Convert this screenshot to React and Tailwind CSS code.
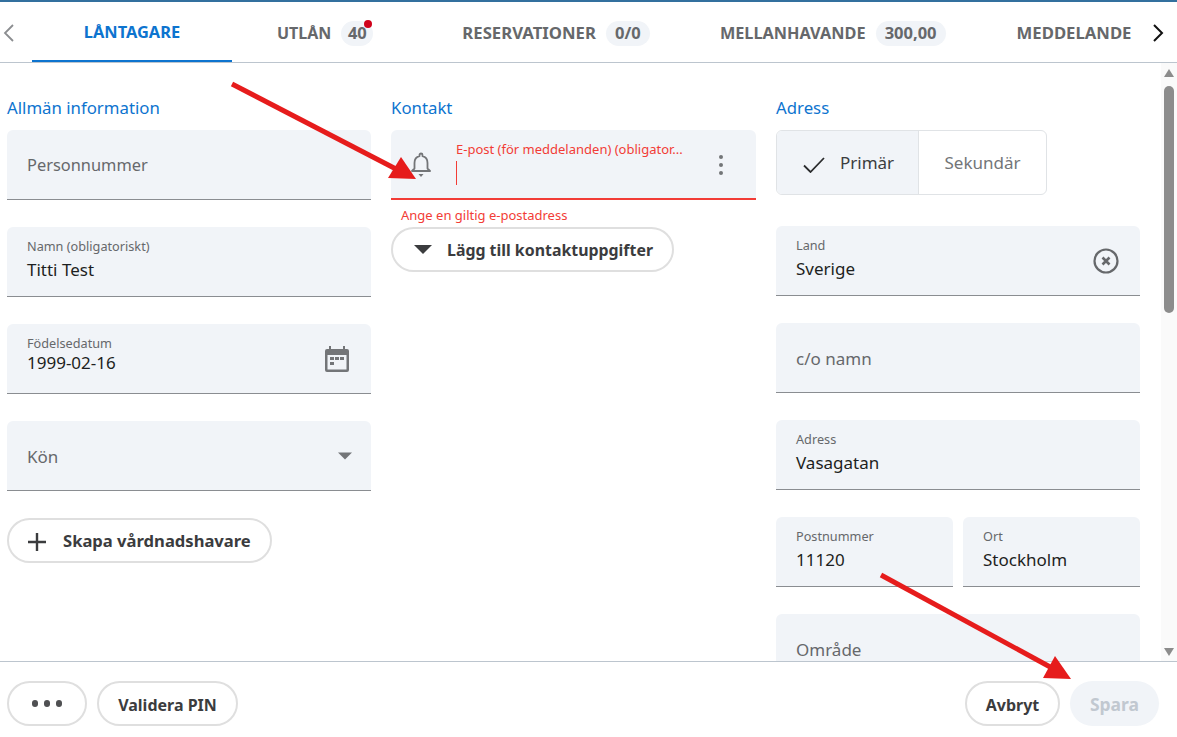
import React from 'react';

const Field = ({ label, value, icon, dense, labelSize = 'text-[17px]', className = 'h-[70px]' }) => (
  <div className={`relative flex flex-col justify-center rounded-t-md border-b border-[#8a8d91] bg-[#f1f4f8] px-5 ${value ? (dense ? 'pb-[8px]' : 'pb-[5px]') : ''} ${className}`}>
    {value ? (
      <>
        <span className="text-[12.7px] leading-4 text-[#66686b]">{label}</span>
        <span className={`${dense ? 'mt-[1px]' : 'mt-[5px]'} text-[17px] leading-[22px] text-[#1d1f21]`}>{value}</span>
      </>
    ) : (
      <span className={`mt-[2px] ${labelSize} text-[#66686b]`}>{label}</span>
    )}
    {icon && <div className="absolute right-[21px] top-1/2 flex -translate-y-1/2">{icon}</div>}
  </div>
);

const Pill = ({ children, className = '' }) => (
  <button className={`flex h-[45px] shrink-0 items-center rounded-full border-2 border-[#dfdfdf] bg-white pt-[2px] font-bold text-[#3b3c3e] ${className}`}>
    {children}
  </button>
);

const Badge = ({ children, className = '' }) => (
  <span className={`ml-[10px] flex h-[25px] shrink-0 items-center justify-center rounded-full bg-[#f1f4f8] text-[16.5px] font-bold text-[#66686b] ${className}`}>
    {children}
  </span>
);

const Tab = ({ children, className = 'text-[16.7px]' }) => (
  <span className={`shrink-0 font-bold text-[#66686b] ${className}`}>{children}</span>
);

const CalendarIcon = () => (
  <svg width="26" height="28" viewBox="0 0 26 28" fill="#737578">
    <path d="M5 1h2v3h12V1h2v3h2a2 2 0 0 1 2 2v19a2 2 0 0 1-2 2H3a2 2 0 0 1-2-2V6a2 2 0 0 1 2-2h2zM3.500 10v14.500h19V10z" />
    <rect x="6" y="12" width="4" height="3" />
    <rect x="11" y="12" width="4" height="3" />
    <rect x="16" y="12" width="4" height="3" />
    <rect x="6" y="17" width="4" height="3" />
  </svg>
);

const ClearIcon = () => (
  <svg width="26" height="26" viewBox="0 0 26 26" fill="none" stroke="#66686b">
    <circle cx="13" cy="13" r="11.5" strokeWidth="2.2" />
    <path d="M9.500 9.500l7 7M16.500 9.500l-7 7" strokeWidth="2.6" />
  </svg>
);

const BellIcon = () => (
  <svg width="20" height="26" viewBox="0 0 20 26" fill="none">
    <path
      d="M10 1.500a1.500 1.500 0 0 1 1.500 1.500v1.200C15 5 16.500 8 16.500 11v5.500L19 19H1l2.500-2.500V11C3.500 8 5 5 8.500 4.200V3A1.500 1.500 0 0 1 10 1.500z"
      stroke="#737578"
      strokeWidth="1.8"
      strokeLinejoin="round"
    />
    <path d="M7.500 22h5L10 25z" fill="#737578" />
  </svg>
);

export default function App() {
  return (
    <div className="relative flex h-[737px] w-[1177px] flex-col overflow-hidden border-t-2 border-[#33709e] bg-white font-['Noto_Sans',sans-serif]">
      {/* Tabs */}
      <div className="flex h-[61px] shrink-0 items-center border-b border-[#bcc5ce] pt-[2px]">
        <svg className="ml-[3px] shrink-0" width="11" height="18" viewBox="0 0 11 18" fill="none" stroke="#8b8d90" strokeWidth="1.800">
          <path d="M10 1L2 9l8 8" />
        </svg>
        <div className="-mt-[2px] ml-[18px] flex h-[60px] w-[200px] shrink-0 items-center justify-center border-b-2 border-[#0d74cf] pt-[2px]">
          <Tab className="text-[16.4px] !text-[#0d74cf]">LÅNTAGARE</Tab>
        </div>
        <Tab className="ml-[45px] text-[16px]">UTLÅN</Tab>
        <Badge className="relative w-[32px]">
          40
          <span className="absolute right-[1px] top-[-1px] h-2 w-2 rounded-full bg-[#d0021b]" />
        </Badge>
        <Tab className="ml-[89px] text-[16.7px]">RESERVATIONER</Tab>
        <Badge className="w-[44px]">0/0</Badge>
        <Tab className="ml-[70px] text-[16.3px]">MELLANHAVANDE</Tab>
        <Badge className="w-[70px]">300,00</Badge>
        <Tab className="ml-[71px] text-[16.7px]">MEDDELANDE</Tab>
        <svg className="ml-[22px] shrink-0" width="11" height="18" viewBox="0 0 11 18" fill="none" stroke="#111111" strokeWidth="2">
          <path d="M1 1l8 8-8 8" />
        </svg>
      </div>

      {/* Content */}
      <div className="relative flex min-h-0 flex-1 overflow-hidden">
        <div className="grid flex-1 grid-cols-[364px_365px_364px] gap-x-5 pl-[7px] pt-[33px]">
          <div className="flex flex-col">
            <h2 className="mb-[11px] h-[23px] text-[16.8px] leading-[23px] text-[#0d74cf]">Allmän information</h2>
            <div className="flex flex-col gap-[27px]">
              <Field label="Personnummer" labelSize="text-[16.4px]" />
              <Field label="Namn (obligatoriskt)" value="Titti Test" />
              <Field label="Födelsedatum" value="1999-02-16" dense icon={<CalendarIcon />} />
              <Field
                label="Kön"
                icon={<div className="mr-[-2px] h-0 w-0 border-x-[7px] border-t-[7px] border-x-transparent border-t-[#737578]" />}
              />
              <Pill className="w-[265px] pl-[19px] text-[16.6px]">
                <svg width="18" height="18" viewBox="0 0 18 18" stroke="#3b3c3e" strokeWidth="2.400">
                  <path d="M9 0v18M0 9h18" />
                </svg>
                <span className="ml-[17px]">Skapa vårdnadshavare</span>
              </Pill>
            </div>
          </div>

          <div className="flex flex-col">
            <h2 className="mb-[11px] h-[23px] text-[16.8px] leading-[23px] text-[#0d74cf]">Kontakt</h2>
            <div className="relative h-[70px] rounded-t-md border-b-2 border-[#f23c36] bg-[#f1f4f8]">
              <div className="absolute left-[20px] top-[22px] flex"><BellIcon /></div>
              <span className="absolute left-[65px] top-[11px] text-[13px] leading-4 text-[#f23c36]">E-post (för meddelanden) (obligator...</span>
              <span className="absolute left-[65px] top-[31px] h-6 w-px bg-[#f23c36]" />
              <div className="absolute right-[33px] top-[25px] flex flex-col gap-[4px]">
                <span className="h-1 w-1 rounded-full bg-[#737578]" />
                <span className="h-1 w-1 rounded-full bg-[#737578]" />
                <span className="h-1 w-1 rounded-full bg-[#737578]" />
              </div>
            </div>
            <p className="ml-[10px] mt-[6px] text-[13px] leading-[18px] text-[#f23c36]">Ange en giltig e-postadress</p>
            <Pill className="mt-[3px] w-[283px] pl-[21px] text-[15.9px]">
              <span className="-mt-[2px] h-0 w-0 border-x-[9px] border-t-[9px] border-x-transparent border-t-[#3b3c3e]" />
              <span className="ml-[15px]">Lägg till kontaktuppgifter</span>
            </Pill>
          </div>

          <div className="flex flex-col">
            <h2 className="mb-[11px] h-[23px] text-[16.8px] leading-[23px] text-[#0d74cf]">Adress</h2>
            <div className="mb-[31px] flex h-[65px] w-[271px] overflow-hidden rounded-md border border-[#e0e3e6]">
              <div className="flex w-[142px] items-center border-r border-[#e0e3e6] bg-[#f1f4f8] pl-[26px] text-[#3b3c3e]">
                <svg className="mt-[5px]" width="22" height="16" viewBox="0 0 22 16" fill="none" stroke="#2b2c2e" strokeWidth="1.800">
                  <path d="M1 8.500L7.500 15 21 1" />
                </svg>
                <span className="ml-[15px] text-[17px]">Primär</span>
              </div>
              <div className="flex flex-1 items-center justify-center text-[17px] text-[#737578]">Sekundär</div>
            </div>
            <div className="flex flex-col gap-[27px]">
              <Field label="Land" value="Sverige" icon={<ClearIcon />} />
              <Field label="c/o namn" />
              <Field label="Adress" value="Vasagatan" />
              <div className="grid grid-cols-[177px_177px] gap-x-[10px]">
                <Field label="Postnummer" value="11120" />
                <Field label="Ort" value="Stockholm" />
              </div>
              <Field label="Område" />
            </div>
          </div>
        </div>

        {/* Scrollbar */}
        <div className="flex w-4 shrink-0 flex-col items-center bg-[#fafafa] pt-[6px]">
          <span className="h-0 w-0 border-x-[5px] border-b-[8px] border-x-transparent border-b-[#8c8c8c]" />
          <span className="mt-[9px] h-[227px] w-[10px] rounded-full bg-[#8c8c8c]" />
          <span className="mb-[5px] mt-auto h-0 w-0 border-x-[5px] border-t-[8px] border-x-transparent border-t-[#8c8c8c]" />
        </div>
      </div>

      {/* Footer */}
      <div className="flex h-[76px] shrink-0 items-start border-t border-[#bcc5ce] pl-[7px] pr-[18px] pt-[19px]">
        <Pill className="w-[80px] justify-center gap-[5.500px] !pt-0">
          <span className="h-[6.500px] w-[6.500px] rounded-full bg-[#4f5052]" />
          <span className="h-[6.500px] w-[6.500px] rounded-full bg-[#4f5052]" />
          <span className="h-[6.500px] w-[6.500px] rounded-full bg-[#4f5052]" />
        </Pill>
        <Pill className="ml-[10px] w-[141px] justify-center text-[16px]">Validera PIN</Pill>
        <Pill className="ml-auto w-[95px] justify-center text-[16px]">Avbryt</Pill>
        <button className="ml-[10px] h-[45px] w-[89px] rounded-full bg-[#f1f4f8] pt-[2px] text-[17.500px] font-bold text-[#c1c8d0]">Spara</button>
      </div>

      {/* Annotation arrows */}
      <svg className="pointer-events-none absolute left-0 top-[-2px] h-[737px] w-[1177px]" viewBox="0 0 1177 737">
        <line x1="232" y1="84" x2="396" y2="169" stroke="#e61c1c" strokeWidth="5" />
        <polygon points="388,178 401,157 416,179" fill="#e61c1c" />
        <line x1="881" y1="575" x2="1052" y2="668" stroke="#e61c1c" strokeWidth="5" />
        <polygon points="1043,678 1055,656 1071,679" fill="#e61c1c" />
      </svg>
    </div>
  );
}
